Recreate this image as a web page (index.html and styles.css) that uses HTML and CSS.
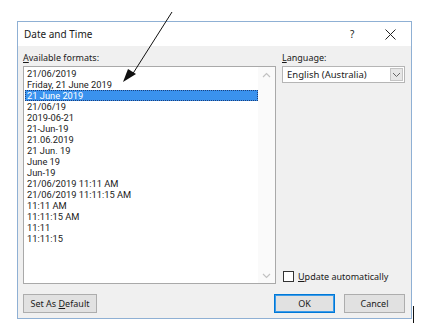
FILE: index.html
```html
<!DOCTYPE html>
<html>
<head>
<meta charset="utf-8">
<link rel="stylesheet" href="styles.css">
</head>
<body>
<div class="dialog">
  <div class="titlebar">
    <span class="title">Date and Time</span>
    <span class="help">?</span>
    <span class="close"><svg width="11" height="11" viewBox="0 0 11 11"><path d="M0.5 0.5 L10.5 10.5 M10.5 0.5 L0.5 10.5" stroke="#222" stroke-width="1" fill="none"/></svg></span>
  </div>
  <div class="content">
    <div class="columns">
      <div class="left">
        <div class="label"><u>A</u>vailable formats:</div>
        <div class="listbox">
          <ul class="items">
            <li>21/06/2019</li>
            <li>Friday, 21 June 2019</li>
            <li class="sel">21 June 2019</li>
            <li>21/06/19</li>
            <li>2019-06-21</li>
            <li>21-Jun-19</li>
            <li>21.06.2019</li>
            <li>21 Jun. 19</li>
            <li>June 19</li>
            <li>Jun-19</li>
            <li>21/06/2019 11:11 AM</li>
            <li>21/06/2019 11:11:15 AM</li>
            <li>11:11 AM</li>
            <li>11:11:15 AM</li>
            <li>11:11</li>
            <li>11:11:15</li>
          </ul>
          <div class="scrollbar">
            <svg width="9" height="6" viewBox="0 0 9 6"><path d="M1 5 L4.5 1.5 L8 5" stroke="#c2c2c2" stroke-width="1.2" fill="none"/></svg>
            <svg width="9" height="6" viewBox="0 0 9 6"><path d="M1 1 L4.5 4.5 L8 1" stroke="#c2c2c2" stroke-width="1.2" fill="none"/></svg>
          </div>
        </div>
      </div>
      <div class="right">
        <div class="label"><u>L</u>anguage:</div>
        <div class="combo">
          <span class="combo-text">English (Australia)</span>
          <span class="combo-btn"><svg width="9" height="6" viewBox="0 0 9 6"><path d="M1 1 L4.5 4.5 L8 1" stroke="#666" stroke-width="1" fill="none"/></svg></span>
        </div>
        <div class="spacer"></div>
        <label class="check"><span class="box"></span><span><u>U</u>pdate automatically</span></label>
      </div>
    </div>
    <div class="buttons">
      <button class="btn default-btn">Set As <u>D</u>efault</button>
      <div class="spacer"></div>
      <button class="btn ok">OK</button>
      <button class="btn">Cancel</button>
    </div>
  </div>
</div>
<svg class="arrow" width="60" height="80" viewBox="0 0 60 80">
  <line x1="52" y1="1" x2="12" y2="64" stroke="#111" stroke-width="1"/>
  <polygon points="3,71 8,58 16,63" fill="#111"/>
</svg>
<div class="caret"></div>
</body>
</html>
```
FILE: styles.css
```css
html, body {
  margin: 0;
  padding: 0;
  background: #ffffff;
}
body {
  font-family: "Noto Sans", "Open Sans", sans-serif;
  font-size: 9px;
  color: #1a1a1a;
  position: relative;
  width: 421px;
  height: 333px;
  overflow: hidden;
}
.dialog {
  position: relative;
  margin: 21px 0 0 17px;
  width: 393px;
  height: 296px;
  border: 1px solid #8fb0d4;
  background: #f0f0f0;
  display: flex;
  flex-direction: column;
}
.titlebar {
  height: 24px;
  background: #ffffff;
  display: flex;
  align-items: center;
  padding: 0 0 0 6px;
}
.title {
  font-size: 10px;
  flex: 1;
}
.help {
  font-size: 10px;
  width: 12px;
  margin-right: 23px;
}
.close {
  display: flex;
  margin-right: 15px;
}
.content {
  flex: 1;
  display: flex;
  flex-direction: column;
  padding: 5px 6px 5px 5px;
}
.columns {
  flex: 1;
  display: flex;
  gap: 6px;
}
.left {
  width: 253px;
  display: flex;
  flex-direction: column;
}
.right {
  flex: 1;
  display: flex;
  flex-direction: column;
}
.label {
  height: 15px;
  line-height: 13px;
}
.listbox {
  height: 216px;
  border: 1px solid #a9a9a9;
  background: #ffffff;
  display: flex;
}
.items {
  list-style: none;
  margin: 0;
  padding: 1px 0 0 1px;
  flex: 1;
  font-family: Roboto, "Noto Sans", sans-serif;
  font-size: 9.3px;
}
.items li {
  height: 11px;
  line-height: 11px;
  padding-left: 2px;
  white-space: nowrap;
}
.items li.sel {
  background: #3a92ee;
  color: #ffffff;
  outline: 1px dotted #1c3f7a;
  outline-offset: -1px;
}
.scrollbar {
  width: 17px;
  background: #fafafa;
  display: flex;
  flex-direction: column;
  justify-content: space-between;
  align-items: center;
  padding: 5px 0 4px;
}
.combo {
  height: 15px;
  border: 1px solid #b5b5b5;
  background: #ffffff;
  display: flex;
  align-items: center;
}
.combo-text {
  flex: 1;
  padding-left: 4px;
  font-size: 9.5px;
}
.combo-btn {
  width: 13px;
  height: 13px;
  margin-right: 1px;
  background: #e6e6e6;
  border: 1px solid #c4c4c4;
  box-sizing: border-box;
  display: flex;
  align-items: center;
  justify-content: center;
}
.spacer {
  flex: 1;
}
.check {
  display: flex;
  align-items: center;
  gap: 4px;
  margin-bottom: 1px;
  padding-left: 1px;
}
.box {
  width: 9px;
  height: 9px;
  border: 1px solid #333;
  background: #ffffff;
}
.buttons {
  display: flex;
  align-items: center;
  margin-top: 10px;
  gap: 9px;
}
.btn {
  font-family: inherit;
  font-size: 9px;
  color: #1a1a1a;
  height: 19px;
  width: 61px;
  padding: 0;
  background: #e1e1e1;
  border: 1px solid #adadad;
}
.default-btn {
  width: 74px;
}
.ok {
  border: 1px solid #0078d7;
  box-shadow: inset 0 0 0 1px #3c9be8;
}
.arrow {
  position: absolute;
  left: 120px;
  top: 11px;
}
.caret {
  position: absolute;
  left: 413px;
  top: 306px;
  width: 1px;
  height: 17px;
  background: #111;
}
```
